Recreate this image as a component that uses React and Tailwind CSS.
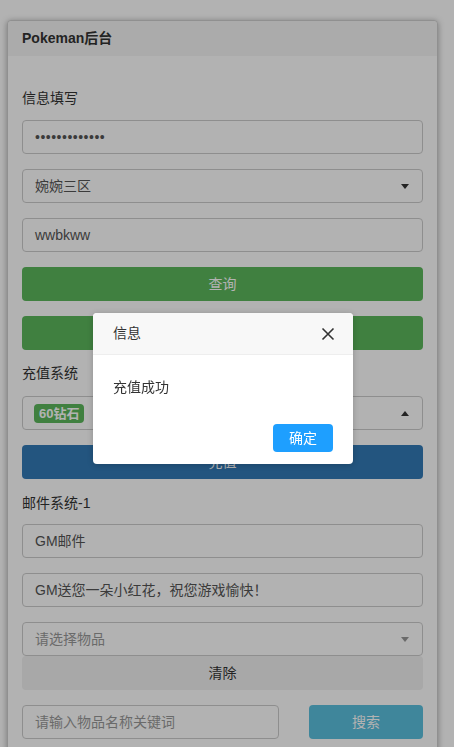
import React from 'react';

const font = { fontFamily: '"Liberation Sans", "Noto Sans CJK SC", sans-serif' };

const Input = ({ value, placeholder, className = '' }) => (
  <div
    className={`h-[34px] flex items-center px-3 border border-[#cccccc] rounded text-[14px] ${
      value ? 'text-[#555555]' : 'text-[#999999]'
    } ${className}`}
  >
    {value || placeholder}
  </div>
);

const Caret = ({ up, light }) => (
  <span
    className={`w-0 h-0 border-x-[4px] border-x-transparent ${
      up ? 'border-b-[5px]' : 'border-t-[5px]'
    } ${light ? 'border-t-[#999999]' : up ? 'border-b-[#333333]' : 'border-t-[#333333]'}`}
  />
);

const Select = ({ children, up, light }) => (
  <div className="h-[34px] flex items-center justify-between pl-3 pr-[13px] border border-[#cccccc] rounded text-[14px]">
    <div className="flex items-center">{children}</div>
    <Caret up={up} light={light} />
  </div>
);

const Button = ({ children, className }) => (
  <div className={`h-[34px] flex items-center justify-center rounded text-[14px] ${className}`}>
    {children}
  </div>
);

export default function App() {
  return (
    <div className="min-h-[747px] bg-white relative overflow-hidden" style={font}>
      <div className="pt-5 pl-[7px] pr-4">
        <div className="w-[431px] border border-[#cfcfcf] rounded shadow-[0_1px_6px_rgba(0,0,0,0.35)] bg-white">
          <div className="h-[35px] bg-[#f5f5f5] flex items-center pl-[14px] text-[14px] font-bold text-[#333333] rounded-t">
            Pokeman后台
          </div>
          <div className="px-[14px] pt-[32px] pb-4 text-[#333333] text-[14px]">
            <div className="h-5 leading-5 mb-[12px]">信息填写</div>
            <div className="flex flex-col gap-[15px]">
              <Input value="•••••••••••••" className="tracking-[0.5px]" />
              <Select>
                <span className="text-[#555555]">婉婉三区</span>
              </Select>
              <Input value="wwbkww" />
              <Button className="bg-[#5cb85c] text-white">查询</Button>
              <Button className="bg-[#5cb85c] text-white">充值记录</Button>
            </div>
            <div className="h-5 leading-5 mt-[13px] mb-[13px]">充值系统</div>
            <Select up>
              <span className="bg-[#5cb85c] text-white font-bold text-[13px] px-[5px] h-[19px] leading-[19px] rounded-sm -ml-[1px]">
                60钻石
              </span>
            </Select>
            <Button className="bg-[#337ab7] text-white mt-[15px]">充值</Button>
            <div className="h-5 leading-5 mt-[14px] mb-[11px]">邮件系统-1</div>
            <div className="flex flex-col gap-[15px]">
              <Input value="GM邮件" />
              <Input value="GM送您一朵小红花，祝您游戏愉快！" />
            </div>
            <div className="mt-[15px]">
              <Select light>
                <span className="text-[#999999]">请选择物品</span>
              </Select>
            </div>
            <Button className="bg-[#f1f1f1] text-[#333333]">清除</Button>
            <div className="flex justify-between mt-[15px]">
              <Input placeholder="请输入物品名称关键词" className="w-[257px]" />
              <Button className="w-[114px] bg-[#5bc0de] text-white">搜索</Button>
            </div>
          </div>
        </div>
      </div>

      <div className="fixed inset-0 bg-black/30" />

      <div className="fixed left-[93px] top-[313px] w-[260px] bg-white rounded-sm shadow-[0_1px_6px_rgba(0,0,0,0.2)]">
        <div className="h-[42px] bg-[#f8f8f8] border-b border-[#eeeeee] flex items-center justify-between pl-5 pr-[18px] text-[14px] text-[#333333] rounded-t-sm">
          <span>信息</span>
          <svg width="14" height="14" viewBox="0 0 14 14" className="text-[#333333]">
            <path d="M1.5 1.5 L12.5 12.5 M12.5 1.5 L1.5 12.5" stroke="currentColor" strokeWidth="1.6" />
          </svg>
        </div>
        <div className="px-5 py-5 leading-6 text-[14px] text-[#333333]">充值成功</div>
        <div className="flex justify-end pr-5 pt-[5px] pb-3">
          <div className="w-[60px] h-[28px] bg-[#1e9fff] text-white text-[14px] flex items-center justify-center rounded-sm">
            确定
          </div>
        </div>
      </div>
    </div>
  );
}
